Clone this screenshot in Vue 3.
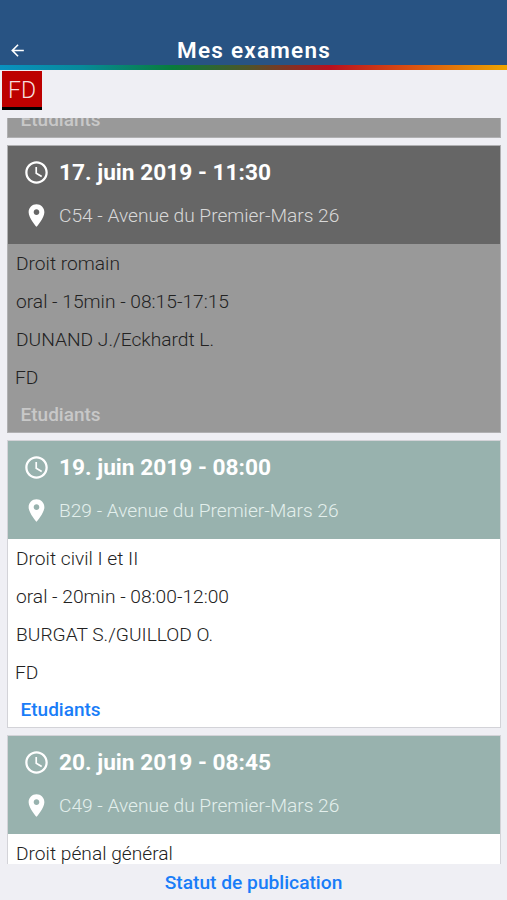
<template>
  <div class="page">
    <header class="navbar">
      <div class="navbar-inner">
        <button class="back" aria-label="Retour">
          <svg viewBox="0 0 24 24" width="19" height="19">
            <path d="M20 11H7.83l5.59-5.59L12 4l-8 8 8 8 1.41-1.41L7.83 13H20v-2z" />
          </svg>
        </button>
        <h1 class="title">Mes examens</h1>
      </div>
      <div class="rainbow"></div>
    </header>

    <div class="filters">
      <button class="faculty">FD</button>
    </div>

    <main class="list">
      <div v-for="(exam, index) in exams" :key="index" class="card" :class="{ past: exam.past }">
        <div v-if="exam.date" class="card-header">
          <div class="row date">
            <svg class="icon" viewBox="0 0 24 24">
              <path
                d="M11.99 2C6.47 2 2 6.48 2 12s4.47 10 9.99 10C17.52 22 22 17.52 22 12S17.52 2 11.99 2zM12 20c-4.42 0-8-3.58-8-8s3.58-8 8-8 8 3.58 8 8-3.58 8-8 8zm.5-13H11v6l5.25 3.15.75-1.23-4.5-2.67z"
              />
            </svg>
            <span>{{ exam.date }}</span>
          </div>
          <div class="row place">
            <svg class="icon" viewBox="0 0 24 24">
              <path
                d="M12 2C8.13 2 5 5.13 5 9c0 5.25 7 13 7 13s7-7.75 7-13c0-3.87-3.13-7-7-7zm0 9.5c-1.38 0-2.5-1.12-2.5-2.5s1.12-2.5 2.5-2.5 2.5 1.12 2.5 2.5-1.12 2.5-2.5 2.5z"
              />
            </svg>
            <span>{{ exam.place }}</span>
          </div>
        </div>
        <div class="card-body">
          <p v-for="line in exam.lines" :key="line">{{ line }}</p>
          <p v-if="exam.faculty" class="exam-faculty">{{ exam.faculty }}</p>
          <a v-if="exam.students" class="students">Etudiants</a>
        </div>
      </div>
    </main>

    <footer class="toolbar">
      <a>Statut de publication</a>
    </footer>
  </div>
</template>

<script setup>
import { ref } from 'vue'

const exams = ref([
  { past: true, lines: [], students: true },
  {
    past: true,
    date: '17. juin 2019 - 11:30',
    place: 'C54 - Avenue du Premier-Mars 26',
    lines: ['Droit romain', 'oral - 15min - 08:15-17:15', 'DUNAND J./Eckhardt L.'],
    faculty: 'FD',
    students: true
  },
  {
    date: '19. juin 2019 - 08:00',
    place: 'B29 - Avenue du Premier-Mars 26',
    lines: ['Droit civil I et II', 'oral - 20min - 08:00-12:00', 'BURGAT S./GUILLOD O.'],
    faculty: 'FD',
    students: true
  },
  {
    date: '20. juin 2019 - 08:45',
    place: 'C49 - Avenue du Premier-Mars 26',
    lines: ['Droit pénal général']
  }
])
</script>

<style>
body {
  background: #efeff4;
}
</style>

<style scoped>
.page {
  height: 900px;
  display: flex;
  flex-direction: column;
  overflow: hidden;
  background: #efeff4;
  font-family: Roboto, 'Liberation Sans', sans-serif;
  font-size: 19.2px;
  font-weight: 300;
  color: #222;
}
.navbar {
  height: 70px;
  flex: none;
  display: flex;
  flex-direction: column;
  justify-content: flex-end;
  background: #285383;
}
.navbar-inner {
  height: 30px;
  display: grid;
  grid-template-columns: 40px 1fr 40px;
  align-items: center;
}
.back {
  display: flex;
  padding: 0 0 0 8px;
  border: 0;
  background: none;
  fill: #fff;
}
.title {
  margin: 0;
  padding-left: 1px;
  text-align: center;
  font-size: 22.5px;
  line-height: 30px;
  font-weight: 600;
  letter-spacing: 1.25px;
  color: #fff;
}
.rainbow {
  height: 5px;
  background: linear-gradient(90deg, #0a91c0 0%, #078a9a 16%, #087c3c 34%, #4f5428 49%, #b7101f 65%, #d94c12 80%, #eda500 100%);
}
.filters {
  height: 48px;
  flex: none;
  padding: 1px 2px 0;
  box-sizing: border-box;
}
.faculty {
  width: 40px;
  height: 39px;
  padding: 1px 0 0;
  border: 0;
  border-bottom: 3px solid #000;
  background: #bd0000;
  color: #f6dede;
  font-family: inherit;
  font-size: 23px;
  line-height: 37px;
  font-weight: 300;
}
.list {
  flex: 1;
  min-height: 0;
  overflow: hidden;
  padding: 0 6px 0 7px;
}
.card {
  height: 288px;
  margin-bottom: 7px;
  box-sizing: border-box;
  border: 1px solid #d3d3d8;
  background: #fff;
}
.card:first-child {
  height: 20px;
  display: flex;
  align-items: flex-end;
  overflow: hidden;
  border-top: 0;
}
.card.past {
  background: #999;
  border-color: #b0b0b2;
}
.card-header {
  height: 98px;
  box-sizing: border-box;
  padding: 5px 14.5px;
  background: #98b2ae;
}
.past .card-header {
  background: #666;
}
.row {
  height: 43px;
  display: flex;
  align-items: center;
  gap: 9.5px;
}
.icon {
  width: 27px;
  height: 27px;
  flex: none;
  fill: #fff;
}
.date {
  font-size: 22.7px;
  font-weight: 700;
  color: #fff;
}
.place {
  font-size: 19.15px;
  color: #e3efec;
}
.past .place {
  color: #d8d8d8;
}
.card-body {
  padding: 1px 8px 0;
}
.card-body p {
  margin: 0;
  line-height: 38.1px;
}
.card-body .exam-faculty {
  margin-left: -1px;
}
.students {
  display: block;
  padding-left: 4.5px;
  font-size: 19px;
  line-height: 35px;
  font-weight: 500;
  color: #197df8;
}
.card:first-child .students {
  line-height: 34px;
}
.past .students {
  color: #c8c8c8;
}
.toolbar {
  height: 36px;
  flex: none;
  text-align: center;
  line-height: 37px;
  font-weight: 500;
  color: #197df8;
}
</style>
